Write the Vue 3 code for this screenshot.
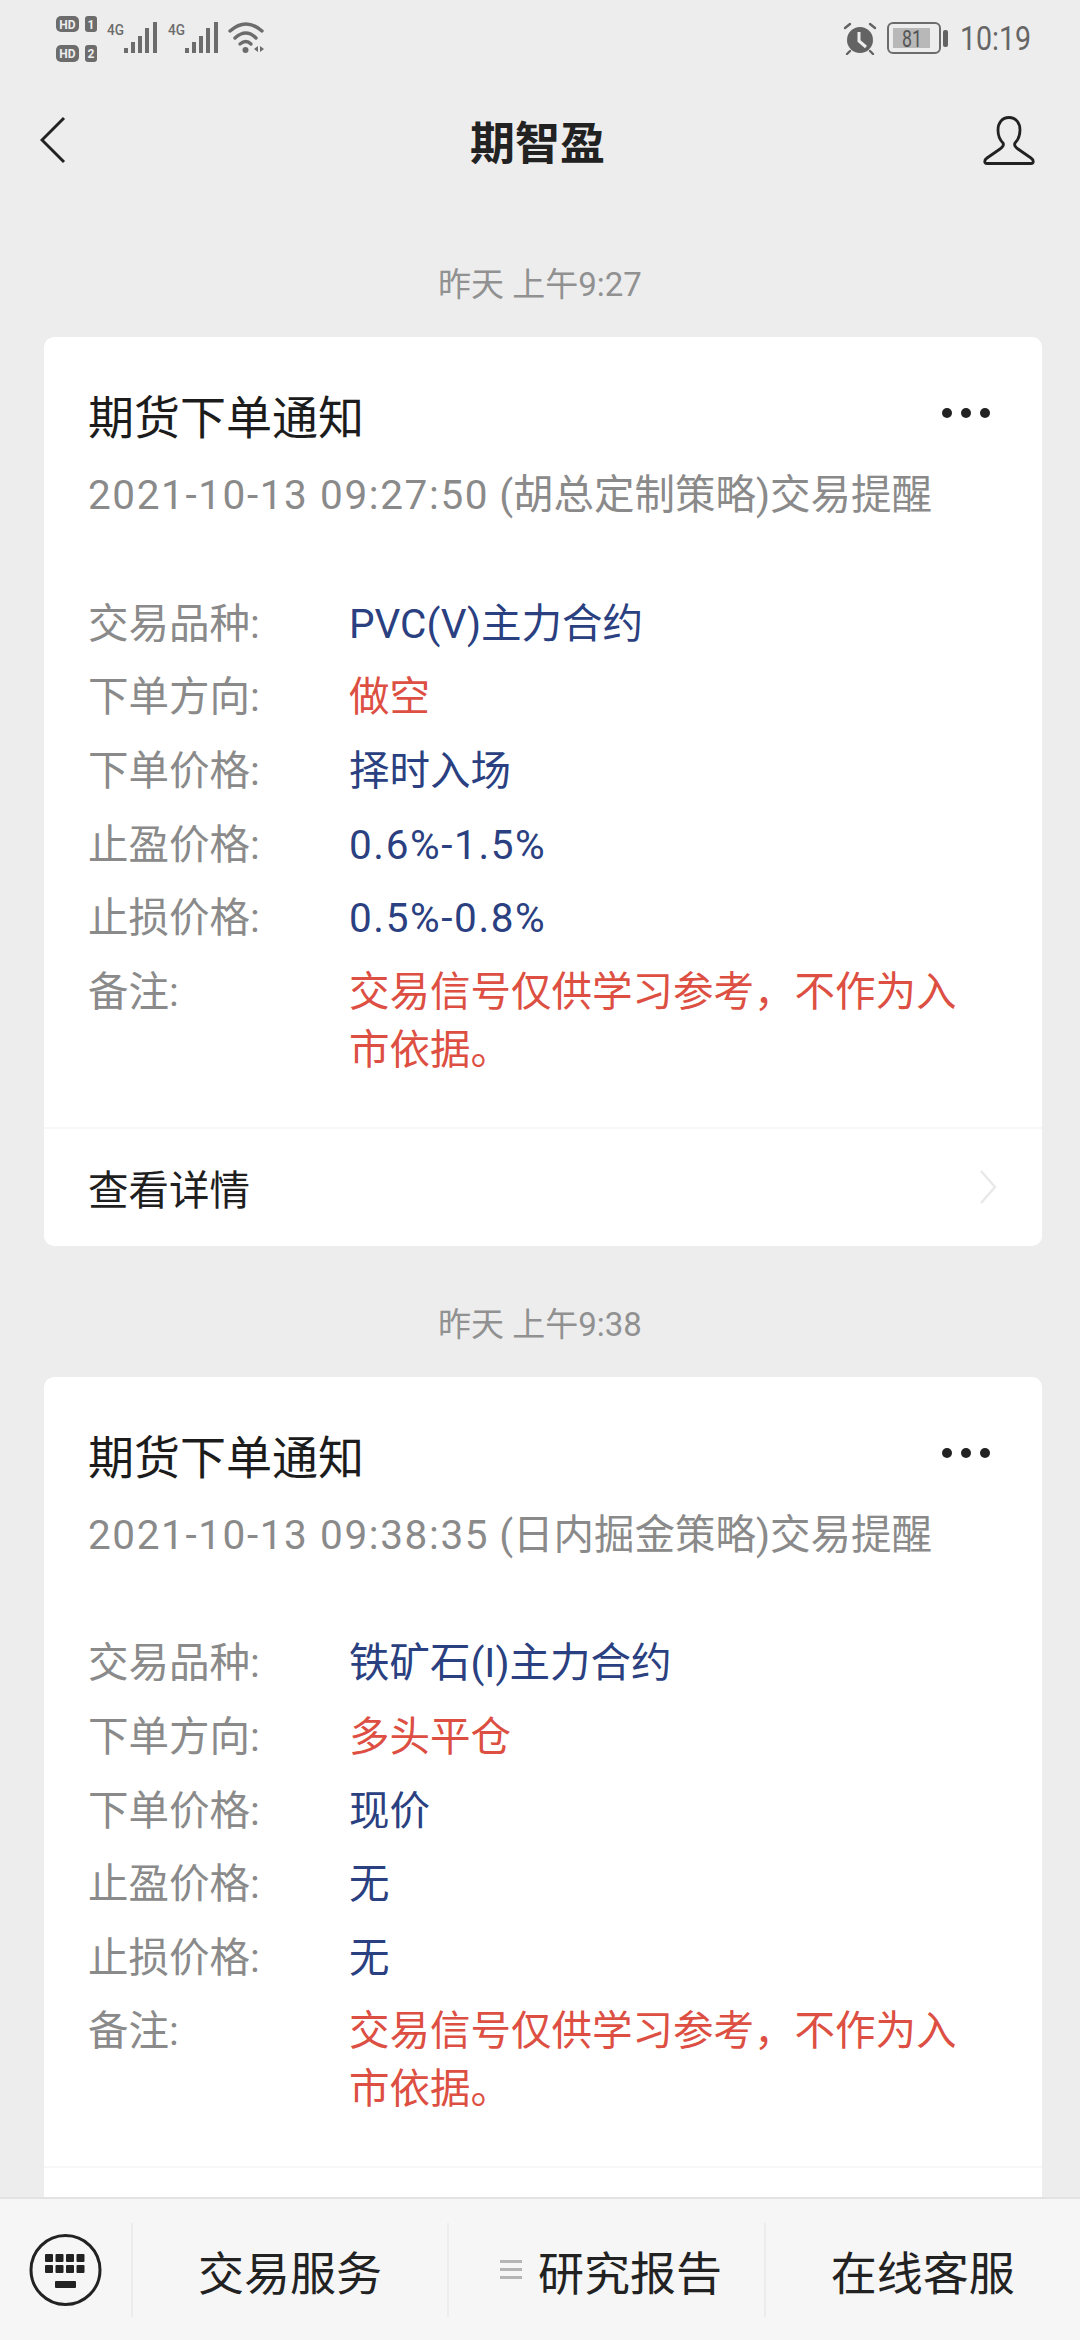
<script setup>
const notices = [
  {
    time: '昨天 上午9:27',
    date: '2021-10-13 09:27:50',
    topic: '(胡总定制策略)交易提醒',
    showDetail: true,
    rows: [
      { label: '交易品种:', value: 'PVC(V)主力合约' },
      { label: '下单方向:', value: '做空', warn: true },
      { label: '下单价格:', value: '择时入场' },
      { label: '止盈价格:', value: '0.6%-1.5%', num: true },
      { label: '止损价格:', value: '0.5%-0.8%', num: true },
      { label: '备注:', value: '交易信号仅供学习参考，不作为入市依据。', warn: true },
    ],
  },
  {
    time: '昨天 上午9:38',
    date: '2021-10-13 09:38:35',
    topic: '(日内掘金策略)交易提醒',
    // the second card's link row sits under the tab bar
    showDetail: false,
    rows: [
      { label: '交易品种:', value: '铁矿石(I)主力合约' },
      { label: '下单方向:', value: '多头平仓', warn: true },
      { label: '下单价格:', value: '现价' },
      { label: '止盈价格:', value: '无' },
      { label: '止损价格:', value: '无' },
      { label: '备注:', value: '交易信号仅供学习参考，不作为入市依据。', warn: true },
    ],
  },
]

const signalBars = [
  { x: 68, h: 5 },
  { x: 75, h: 11 },
  { x: 82, h: 17 },
  { x: 89, h: 25 },
  { x: 97, h: 31 },
]
const keyColumns = [16, 26.5, 37, 47.5]
</script>

<template>
  <div class="page">
    <div class="status-bar">
      <svg class="status-left" width="214" height="46" viewBox="0 0 214 46">
        <g fill="#6c6c6c">
          <rect x="0" y="0" width="23" height="16" rx="5" />
          <rect x="29" y="0" width="12" height="16" rx="3" />
          <rect x="0" y="29" width="23" height="17" rx="5" />
          <rect x="29" y="29" width="12" height="17" rx="3" />
        </g>
        <g class="tiny" fill="#eee" text-anchor="middle">
          <text x="11.5" y="12.5">HD</text>
          <text x="35" y="12.5">1</text>
          <text x="11.5" y="42">HD</text>
          <text x="35" y="42">2</text>
        </g>
        <g v-for="dx in [0, 61]" :key="dx" :transform="`translate(${dx} 0)`" fill="#6c6c6c">
          <text class="net" x="51" y="19" textLength="17" lengthAdjust="spacingAndGlyphs">4G</text>
          <rect v-for="b in signalBars" :key="b.x" :x="b.x" :y="37 - b.h" width="4" :height="b.h" />
        </g>
        <g fill="none" stroke="#6c6c6c" stroke-width="3.4" stroke-linecap="round">
          <path d="M174 15 Q190 1 206 15" />
          <path d="M179 22 Q190 12 200 22" />
          <path d="M184 28 Q190 23 195 28" />
        </g>
        <circle cx="189.5" cy="34" r="3" fill="#6c6c6c" />
        <path d="M202 30 L202 36 L198 33 Z M204 30 L204 36 L208 33 Z" fill="#6c6c6c" />
      </svg>
      <div class="status-right">
        <svg width="34" height="33" viewBox="0 0 34 33">
          <circle cx="17" cy="18" r="13" fill="#636363" />
          <path d="M16 10 L16 19 L23 25" fill="none" stroke="#eee" stroke-width="3" />
          <g fill="none" stroke="#636363" stroke-width="2.4" stroke-linecap="round">
            <path d="M2 6 L7 2" />
            <path d="M32 6 L27 2" />
            <path d="M7 29 L4 32" />
            <path d="M27 29 L30 32" />
          </g>
        </svg>
        <svg class="battery" width="61" height="32" viewBox="0 0 61 32">
          <rect x="1" y="1" width="52" height="30" rx="5" fill="none" stroke="#6c6c6c" stroke-width="2" />
          <rect x="6" y="6" width="37" height="20" fill="#b8b8b8" />
          <rect x="56" y="8" width="5" height="17" rx="2" fill="#636363" />
          <text x="25" y="25" text-anchor="middle" textLength="20" lengthAdjust="spacingAndGlyphs">81</text>
        </svg>
        <span class="clock">10:19</span>
      </div>
    </div>

    <div class="nav-bar">
      <svg width="26" height="48" viewBox="0 0 26 48">
        <path d="M24 2 L2 24 L24 46" fill="none" stroke="#222" stroke-width="3" />
      </svg>
      <span class="nav-title">期智盈</span>
      <svg class="nav-user" width="52" height="49" viewBox="0 0 52 49">
        <path
          d="M26 1.5 C19 1.5 15 7 15 14 C15 20 17 24 20 27 C21 29 20 31 17 33 L4 42 C1 44 1 47.5 4 47.5 L48 47.5 C51 47.5 51 44 48 42 L35 33 C32 31 31 29 32 27 C35 24 37 20 37 14 C37 7 33 1.5 26 1.5 Z"
          fill="none"
          stroke="#222"
          stroke-width="2.8"
        />
      </svg>
    </div>

    <div class="feed">
      <template v-for="notice in notices" :key="notice.time">
        <div class="time-label">{{ notice.time }}</div>
        <section class="card">
          <div class="card-head">
            <h2 class="card-title">期货下单通知</h2>
            <div class="more"><i></i><i></i><i></i></div>
          </div>
          <p class="card-sub"><span class="num">{{ notice.date }}</span> {{ notice.topic }}</p>
          <div class="rows">
            <div v-for="row in notice.rows" :key="row.label" class="row">
              <span class="row-label">{{ row.label }}</span>
              <span class="row-value" :class="{ warn: row.warn, num: row.num }">{{ row.value }}</span>
            </div>
          </div>
          <div class="card-foot">
            <template v-if="notice.showDetail">
              <span>查看详情</span>
              <svg width="20" height="36" viewBox="0 0 20 36">
                <path d="M3 2 L17 18 L3 34" fill="none" stroke="#e8e8e8" stroke-width="2.4" />
              </svg>
            </template>
          </div>
        </section>
      </template>
    </div>

    <div class="tab-bar">
      <div class="keyboard-cell">
        <svg width="74" height="74" viewBox="0 0 74 74">
          <circle cx="36.5" cy="37" r="34.5" fill="none" stroke="#222" stroke-width="3" />
          <g fill="#222">
            <template v-for="x in keyColumns" :key="x">
              <rect :x="x" y="21" width="8" height="8" rx="1" />
              <rect :x="x" y="32" width="8" height="8" rx="1" />
            </template>
            <rect x="26" y="48" width="21" height="7" rx="1" />
          </g>
        </svg>
      </div>
      <div class="tab">交易服务</div>
      <div class="tab tab-menu">
        <span class="menu-mark"><i></i><i></i><i></i></span>
        研究报告
      </div>
      <div class="tab">在线客服</div>
    </div>
  </div>
</template>

<style>
html,
body {
  margin: 0;
  background: #ededed;
}
</style>

<style scoped>
.page {
  width: 1080px;
  height: 2340px;
  display: flex;
  flex-direction: column;
  overflow: hidden;
  background: #ededed;
  color: #222;
  font-family: Roboto, "Noto Sans CJK SC", sans-serif;
}

.status-bar {
  height: 90px;
  box-sizing: border-box;
  padding: 16px 50px 0 56px;
  display: flex;
  justify-content: space-between;
  align-items: flex-start;
  flex-shrink: 0;
}

.status-right {
  display: flex;
  align-items: center;
  gap: 10px;
  margin-top: 5px;
}

.tiny {
  font-size: 12px;
  font-weight: 700;
}

.net {
  font-size: 15px;
  font-weight: 500;
}

.battery text {
  font-size: 23px;
  fill: #555;
}

.clock {
  width: 70px;
  font-size: 34px;
  line-height: 34px;
  color: #666;
  transform: scaleX(0.84);
  transform-origin: left center;
  white-space: nowrap;
  margin-left: 2px;
}

.nav-bar {
  height: 100px;
  box-sizing: border-box;
  padding: 0 45px 0 40px;
  display: grid;
  grid-template-columns: 1fr auto 1fr;
  align-items: center;
  flex-shrink: 0;
}

.nav-user {
  justify-self: end;
}

.nav-title {
  font-size: 45px;
  font-weight: 700;
}

.feed {
  flex: 1;
  min-height: 0;
  overflow: hidden;
  padding-top: 16px;
}

.time-label {
  padding: 59px 0 32px;
  line-height: 40px;
  font-size: 33px;
  text-align: center;
  color: #919191;
}

.card {
  margin: 0 38px 0 44px;
  background: #fff;
  border-radius: 10px;
}

.card-head {
  display: flex;
  justify-content: space-between;
  align-items: center;
  padding: 55px 52px 0 44px;
}

.card-title {
  margin: 0;
  font-size: 46px;
  line-height: 52px;
  font-weight: 400;
  color: #1c1c1c;
}

.more {
  display: flex;
  gap: 9px;
  margin-top: -10px;
}

.more i {
  width: 10px;
  height: 10px;
  border-radius: 50%;
  background: #222;
}

.card-sub {
  margin: 23px 0 0;
  padding: 0 44px;
  font-size: 40.5px;
  line-height: 56px;
  color: #8a8a8a;
  white-space: nowrap;
}

.num {
  letter-spacing: 1.6px;
}

.rows {
  padding: 64px 44px 40px;
}

.row {
  display: flex;
  padding: 7.8px 0;
  font-size: 40.5px;
  line-height: 58px;
}

.row-label {
  width: 261px;
  flex-shrink: 0;
  color: #8a8a8a;
}

.row-value {
  max-width: 620px;
  color: #2a4080;
}

.row-value.warn {
  color: #dc4f42;
}

.card-foot {
  height: 119px;
  box-sizing: border-box;
  border-top: 2px solid #f7f7f7;
  padding: 0 44px;
  display: flex;
  justify-content: space-between;
  align-items: center;
  font-size: 40.5px;
  color: #1f1f1f;
}

.tab-bar {
  height: 143px;
  box-sizing: border-box;
  border-top: 2px solid #e2e2e2;
  background: #f6f6f6;
  display: flex;
  align-items: center;
  flex-shrink: 0;
}

.keyboard-cell {
  width: 131px;
  display: flex;
  padding-left: 29px;
  box-sizing: border-box;
}

.tab {
  width: 317px;
  height: 94px;
  box-sizing: border-box;
  border-left: 2px solid #ececec;
  display: flex;
  align-items: center;
  justify-content: center;
  font-size: 46px;
  color: #222;
}

.tab-menu {
  padding-left: 9px;
}

.menu-mark {
  display: flex;
  flex-direction: column;
  gap: 5px;
  margin-right: 16px;
}

.menu-mark i {
  width: 22px;
  height: 3px;
  background: #b5b5b5;
}
</style>
